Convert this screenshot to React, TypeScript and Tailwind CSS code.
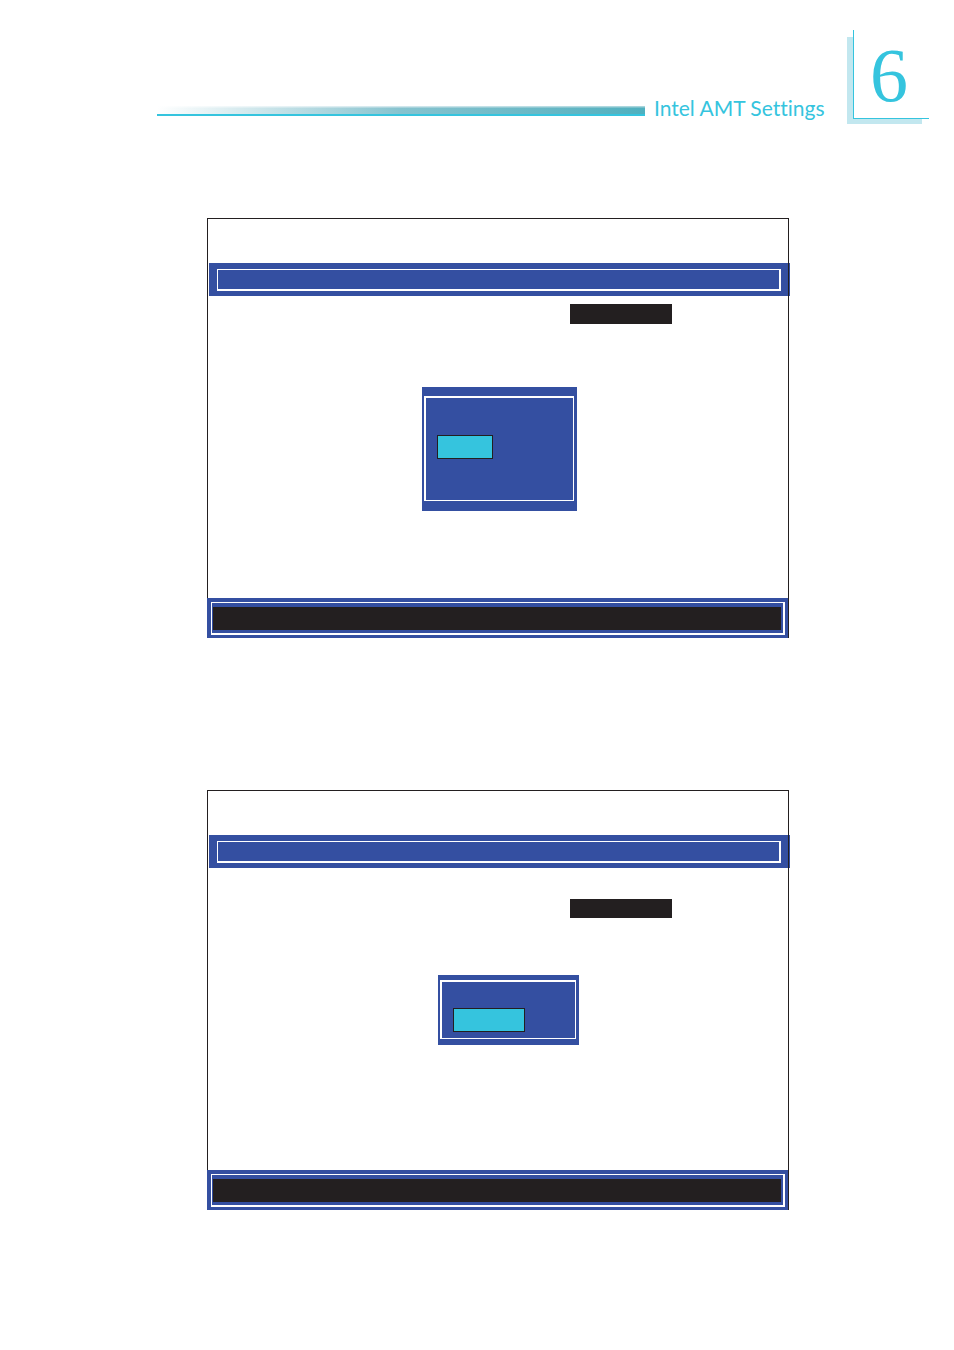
type ScreenProps = {
  tabClass: string;
  dialogClass: string;
  dialogFrameClass: string;
  optionClass: string;
};

function BiosScreen({ tabClass, dialogClass, dialogFrameClass, optionClass }: ScreenProps) {
  return (
    <section className="border-x border-t border-[#231f20] pt-11">
      <div className="ml-px -mr-0.5 bg-[#344fa1] pr-px">
        <div className="h-[33px] border-r border-[#231f20] pt-1.5 pr-[7px] pl-2">
          <div className="h-[22px] border-t border-r-2 border-b-2 border-l border-white" />
        </div>
      </div>

      <div className={`ml-[362px] w-[102px] bg-[#231f20] ${tabClass}`} />

      <div className={`bg-[#344fa1] pr-[3px] pl-0.5 ${dialogClass}`}>
        <div className={`border-t-2 border-r border-b border-l-2 border-white pl-[11px] ${dialogFrameClass}`}>
          <div className={`h-6 border border-[#231f20] bg-[#35c4de] ${optionClass}`} />
        </div>
      </div>

      <footer className="-ml-px bg-[#344fa1] pt-1 pr-[3px] pb-[3px] pl-1">
        <div className="border-t border-r-2 border-b-2 border-l border-white pt-1 pr-0.5 pb-[3px] pl-px">
          <div className="h-[23px] bg-[#231f20]" />
        </div>
      </footer>
    </section>
  );
}

function PageHeader() {
  return (
    <header className="flex items-start pt-[30px] pr-[25px] pl-[157px] text-[#35c4de]">
      <div className="mt-[76px] flex-1 border-b-2 border-[#35c4de]">
        <div className="h-px bg-linear-to-r from-white via-[#cfe6ec] to-[#a6d5dc]" />
        <div className="h-px bg-linear-to-r from-white via-[#a9d3dc] to-[#79c0cb]" />
        <div className="h-1.5 bg-linear-to-r from-white via-[#86c3cf] to-[#4fb0bf]" />
      </div>
      <h1 className="mt-16 ml-[9px] w-[168px] font-['Lato',sans-serif] text-[21px] leading-7 whitespace-nowrap [font-variant-ligatures:none]">
        Intel AMT Settings
      </h1>
      <div className="ml-[25px] flex">
        <div className="mt-[7px] h-[87px] w-1.5 bg-[#c2e7ef]" />
        <div className="w-[76px]">
          <div className="h-[89px] border-b border-l border-[#35c4de] pl-4 font-['Liberation_Serif',serif] text-[76px] leading-[90px]">
            6
          </div>
          <div className="mr-[7px] h-[5px] bg-[#c2e7ef]" />
        </div>
      </div>
    </header>
  );
}

export default function App() {
  return (
    <div className="min-h-screen bg-white pb-[140px]">
      <PageHeader />
      <main className="mt-[94px] mr-[165px] ml-[207px] flex flex-col gap-[152px]">
        <BiosScreen
          tabClass="mt-2 h-5"
          dialogClass="mt-[63px] mb-[87px] ml-[214px] h-[124px] w-[155px] pt-[9px]"
          dialogFrameClass="h-[105px] pt-[37px]"
          optionClass="w-14"
        />
        <BiosScreen
          tabClass="mt-[31px] h-[19px]"
          dialogClass="mt-[57px] mb-[125px] ml-[230px] h-[70px] w-[141px] pt-[5px]"
          dialogFrameClass="h-[59px] pt-[26px]"
          optionClass="w-[72px]"
        />
      </main>
    </div>
  );
}
